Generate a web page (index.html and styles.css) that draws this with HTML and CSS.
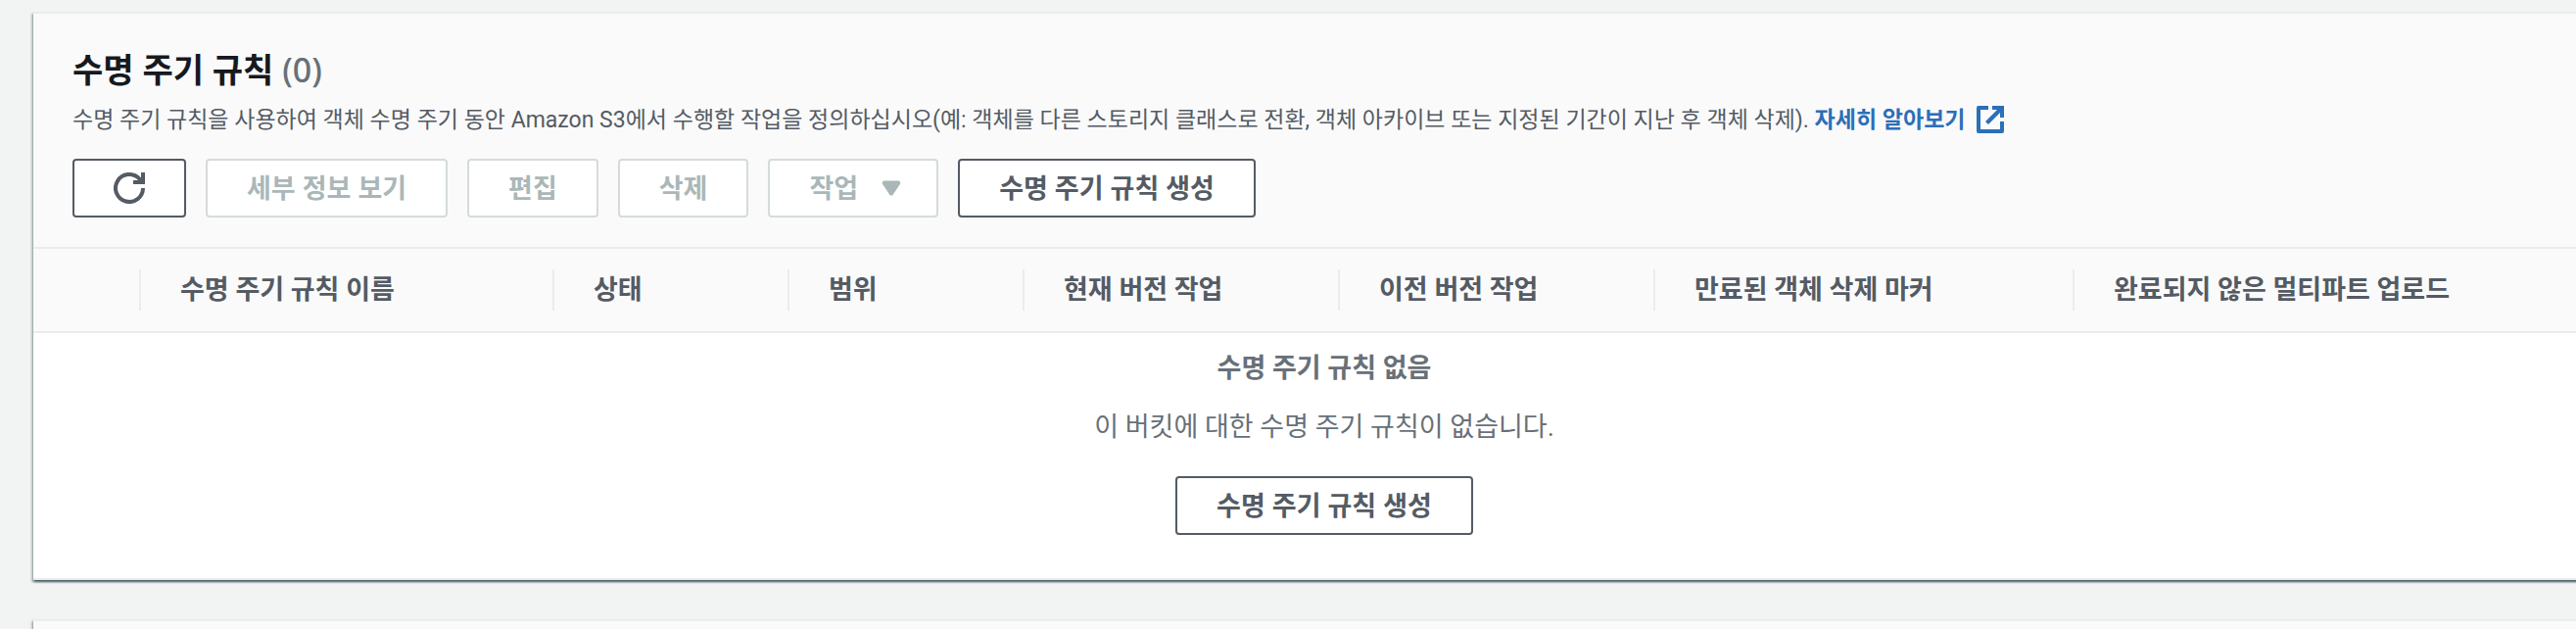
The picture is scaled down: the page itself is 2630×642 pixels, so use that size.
FILE: index.html
```html
<!DOCTYPE html>
<html lang="ko">
<head>
  <meta charset="UTF-8" />
  <meta name="viewport" content="width=device-width, initial-scale=1.0" />
  <title>수명 주기 규칙</title>
  <link rel="stylesheet" href="styles.css">
</head>
<body>
  <main class="page">
    <section class="card">
      <header class="card-header">
        <h2>수명 주기 규칙 <span class="counter">(0)</span></h2>
        <p class="description">
          수명 주기 규칙을 사용하여 객체 수명 주기 동안 Amazon S3에서 수행할 작업을 정의하십시오(예: 객체를 다른 스토리지 클래스로 전환, 객체 아카이브 또는 지정된 기간이 지난 후 객체 삭제).
          <a href="#">자세히 알아보기
            <svg class="icon-external" viewBox="0 0 28 28" aria-hidden="true">
              <path d="M12 2H2v24h24V16" fill="none" stroke="currentColor" stroke-width="4" stroke-linejoin="round" />
              <path d="M16 0h12v12h-4V7L12 19l-3-3L21 4h-5z" fill="currentColor" />
            </svg>
          </a>
        </p>
        <div class="actions">
          <button type="button" class="btn btn-icon" aria-label="새로 고침">
            <svg class="icon-refresh" viewBox="0 0 32 32" aria-hidden="true">
              <path d="M30 16A14 14 0 1 1 26 6.200L29 10" fill="none" stroke="currentColor" stroke-width="4" />
              <path d="M20 12V8h8V0h4v12z" fill="currentColor" />
            </svg>
          </button>
          <button type="button" class="btn" disabled>세부 정보 보기</button>
          <button type="button" class="btn" disabled>편집</button>
          <button type="button" class="btn" disabled>삭제</button>
          <button type="button" class="btn btn-menu" disabled>
            작업
            <svg class="icon-caret" viewBox="0 0 20 16" aria-hidden="true">
              <path d="M2 1h16l1 2-8 12H9L1 3z" fill="currentColor" stroke="currentColor" stroke-linejoin="round" />
            </svg>
          </button>
          <button type="button" class="btn">수명 주기 규칙 생성</button>
        </div>
      </header>

      <table class="rules">
        <colgroup>
          <col class="col-select">
          <col class="col-name">
          <col class="col-short">
          <col class="col-short">
          <col class="col-version">
          <col class="col-version">
          <col class="col-marker">
          <col>
        </colgroup>
        <thead>
          <tr>
            <td></td>
            <th scope="col"><span>수명 주기 규칙 이름</span></th>
            <th scope="col"><span>상태</span></th>
            <th scope="col"><span>범위</span></th>
            <th scope="col"><span>현재 버전 작업</span></th>
            <th scope="col"><span>이전 버전 작업</span></th>
            <th scope="col"><span>만료된 객체 삭제 마커</span></th>
            <th scope="col"><span>완료되지 않은 멀티파트 업로드</span></th>
          </tr>
        </thead>
        <tbody>
          <tr>
            <td colspan="8" class="empty">
              <p><strong>수명 주기 규칙 없음</strong></p>
              <p>이 버킷에 대한 수명 주기 규칙이 없습니다.</p>
              <button type="button" class="btn">수명 주기 규칙 생성</button>
            </td>
          </tr>
        </tbody>
      </table>
    </section>

    <section class="card">
      <header class="card-header"></header>
    </section>
  </main>
</body>
</html>
```

FILE: styles.css
```css
* {
  box-sizing: border-box;
}
body {
  margin: 0;
  background: #f2f3f3;
  color: #545b64;
  font-family: Roboto, "Noto Sans CJK KR", sans-serif;
  font-size: 27px;
  line-height: 40px;
}
.page {
  display: flex;
  flex-direction: column;
  gap: 40px;
  height: 100vh;
  padding: 12px 0 0 34px;
  overflow: hidden;
}
/* the cards run on past the right edge of the window */
.card {
  flex-shrink: 0;
  margin-right: -40px;
  background: #fff;
  border-top: 2px solid #eaeded;
  box-shadow: 0 2px 2px 0 rgba(0, 28, 36, 0.5),
    2px 2px 2px 0 rgba(0, 28, 36, 0.2),
    -2px 2px 2px 0 rgba(0, 28, 36, 0.2);
}
.card-header {
  padding: 35px 40px 30px;
  background: #fafafa;
  border-bottom: 2px solid #eaeded;
}
h2 {
  margin: 0;
  color: #16191f;
  font-family: "Noto Sans", "Noto Sans CJK KR", sans-serif;
  font-size: 34px;
  font-weight: 700;
  line-height: 44px;
}
.counter {
  color: #687078;
  font-weight: 500;
}
.description {
  margin: 14px 0 23px;
  font-size: 23px;
  line-height: 32px;
}
a {
  color: #2b6fb9;
  font-weight: 700;
  text-decoration: none;
}
.icon-external {
  width: 28px;
  height: 28px;
  margin: 1px 0 0 6px;
  vertical-align: top;
}
.actions {
  display: flex;
  gap: 20px;
}
.btn {
  height: 60px;
  padding: 0 40px;
  background: #fff;
  border: 2px solid #545b64;
  border-radius: 4px;
  color: #545b64;
  font-family: "Noto Sans", "Noto Sans CJK KR", sans-serif;
  font-size: 27px;
  font-weight: 700;
  line-height: 40px;
  cursor: pointer;
}
.btn:disabled {
  border-color: #d5dbdb;
  color: #aab7b8;
  cursor: default;
}
.btn-icon,
.btn-menu {
  display: flex;
  align-items: center;
}
.btn-menu {
  gap: 24px;
  padding-right: 36px;
}
.icon-refresh {
  width: 32px;
  height: 32px;
}
.icon-caret {
  width: 20px;
  height: 16px;
}
.rules {
  width: 100%;
  border-collapse: separate;
  border-spacing: 0;
  table-layout: fixed;
  border-bottom: 2px solid #eaeded;
}
.col-select {
  width: 108px;
}
.col-name {
  width: 422px;
}
.col-short {
  width: 240px;
}
.col-version {
  width: 322px;
}
.col-marker {
  width: 428px;
}
.rules thead th,
.rules thead td {
  padding: 21px 0;
  background: #fafafa;
  border-bottom: 2px solid #eaeded;
  text-align: left;
}
.rules th span {
  display: block;
  padding-left: 40px;
  border-left: 2px solid #eaeded;
  line-height: 42px;
}
.rules .empty {
  padding: 16px 40px 44px;
  color: #687078;
  text-align: center;
}
.empty p {
  margin: 0 0 20px;
}
.empty .btn {
  display: block;
  margin: 30px auto 0;
}
```
